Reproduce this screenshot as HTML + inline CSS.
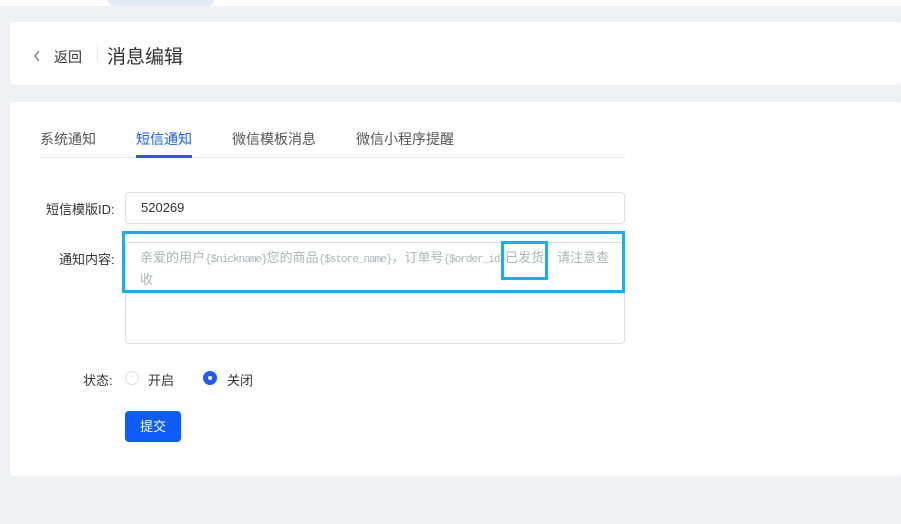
<!DOCTYPE html>
<html><head><meta charset="utf-8"><style>
*{margin:0;padding:0;box-sizing:border-box}
body{width:901px;height:524px;background:#f0f1f5;font-family:"Liberation Sans","Noto Sans CJK SC",sans-serif;position:relative;overflow:hidden;color:#333}
.abs{position:absolute}
.m{font-family:"Liberation Mono",monospace;font-size:11px;letter-spacing:-1px}
</style></head><body>
<div class="abs" style="left:0;top:0;width:901px;height:6px;background:#fff"></div>
<div class="abs" style="left:108px;top:0;width:106px;height:6px;background:#e3ebfb;border-radius:0 0 8px 8px"></div>
<div class="abs" style="left:10px;top:22px;width:891px;height:63px;background:#fff;border-radius:4px"></div>
<svg class="abs" style="left:33px;top:50px" width="8" height="12"><path d="M6 1 L2 6 L6 11" stroke="#666" stroke-width="1.2" fill="none"/></svg>
<div class="abs" style="left:54px;top:47px;font-size:14px;color:#333">返回</div>
<div class="abs" style="left:97px;top:45px;width:1px;height:16px;background:#e5e5e5"></div>
<div class="abs" style="left:107px;top:42px;font-size:19px;color:#333">消息编辑</div>
<div class="abs" style="left:10px;top:102px;width:891px;height:374px;background:#fff;border-radius:4px"></div>
<div class="abs" style="left:40px;top:157px;width:585px;height:1px;background:#e8e8e8"></div>
<div class="abs" style="left:40px;top:129px;font-size:14px;color:#555">系统通知</div>
<div class="abs" style="left:136px;top:129px;font-size:14px;color:#1a5cff">短信通知</div>
<div class="abs" style="left:136px;top:155px;width:56px;height:3px;background:#1a5cff"></div>
<div class="abs" style="left:232px;top:129px;font-size:14px;color:#555">微信模板消息</div>
<div class="abs" style="left:356px;top:129px;font-size:14px;color:#555">微信小程序提醒</div>
<div class="abs" style="left:46px;top:199px;font-size:13px;color:#333">短信模版ID:</div>
<div class="abs" style="left:125px;top:192px;width:500px;height:32px;border:1px solid #dcdfe6;border-radius:4px;background:#fff"></div>
<div class="abs" style="left:141px;top:200px;font-size:13px;color:#333">520269</div>
<div class="abs" style="left:59px;top:249px;font-size:13px;color:#333">通知内容:</div>
<div class="abs" style="left:125px;top:242px;width:500px;height:102px;border:1px solid #dcdfe6;border-radius:4px;background:#fff"></div>
<div class="abs" style="left:140px;top:248px;width:476px;font-size:13px;line-height:19px;color:#b0b3b8">亲爱的用户<span class="m">{$nickname}</span>您的商品<span class="m">{$store_name}</span>，订单号<span class="m">{$order_id}</span>已发货，请注意查收</div>
<div class="abs" style="left:122px;top:231px;width:503px;height:62px;border:3px solid #14b0f5"></div>
<div class="abs" style="left:501px;top:241px;width:47px;height:39px;border:3px solid #14b0f5;background:transparent"></div>
<div class="abs" style="left:83px;top:370px;font-size:13px;color:#333">状态:</div>
<div class="abs" style="left:125px;top:371px;width:14px;height:14px;border:1px solid #dcdfe6;border-radius:50%"></div>
<div class="abs" style="left:148px;top:370px;font-size:13px">开启</div>
<div class="abs" style="left:203px;top:371px;width:14px;height:14px;background:#1a5cff;border-radius:50%"></div>
<div class="abs" style="left:208px;top:376px;width:4px;height:4px;background:#fff;border-radius:50%"></div>
<div class="abs" style="left:227px;top:370px;font-size:13px">关闭</div>
<div class="abs" style="left:125px;top:411px;width:56px;height:31px;background:#0d5cff;border-radius:4px;color:#fff;font-size:13px;text-align:center;line-height:31px">提交</div>
</body></html>
